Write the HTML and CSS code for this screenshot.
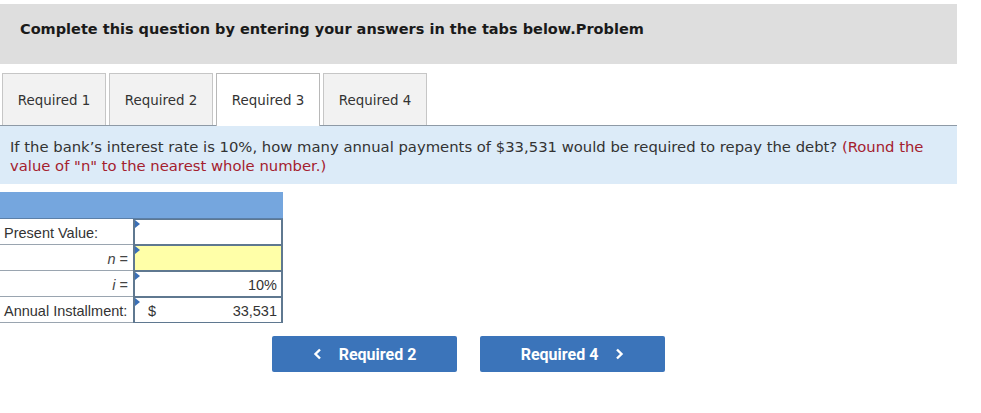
FILE: index.html
```html
<!DOCTYPE html>
<html>
<head>
<meta charset="utf-8">
<link rel="stylesheet" href="styles.css">
</head>
<body>
<div class="page">
  <div class="header">Complete this question by entering your answers in the tabs below.Problem</div>
  <div class="tabs">
    <div class="tab">Required 1</div>
    <div class="tab">Required 2</div>
    <div class="tab active">Required 3</div>
    <div class="tab">Required 4</div>
  </div>
  <div class="question">If the bank’s interest rate is 10%, how many annual payments of $33,531 would be required to repay the debt? <span class="hint">(Round the value of "n" to the nearest whole number.)</span></div>
  <div class="grid">
    <div class="ghead"></div>
    <div class="lbl">Present Value:</div>
    <div class="cell"><span class="flag"></span></div>
    <div class="lbl right"><span><i>n</i> =</span></div>
    <div class="cell yellow"><span class="flag"></span></div>
    <div class="lbl right"><span><i>i</i> =</span></div>
    <div class="cell num"><span class="flag"></span>10%</div>
    <div class="lbl">Annual Installment:</div>
    <div class="cell num split"><span class="flag"></span><span class="cur">$</span><span>33,531</span></div>
  </div>
  <div class="nav">
    <div class="btn"><svg class="chev" width="9" height="12" viewBox="0 0 9 12"><path d="M7 1.5 L2.5 6 L7 10.5" fill="none" stroke="#fff" stroke-width="2.4"/></svg>Required 2</div>
    <div class="btn"><span>Required 4</span><svg class="chev r" width="9" height="12" viewBox="0 0 9 12"><path d="M2 1.5 L6.5 6 L2 10.5" fill="none" stroke="#fff" stroke-width="2.4"/></svg></div>
  </div>
</div>
</body>
</html>
```
FILE: styles.css
```css
html, body { margin: 0; padding: 0; background: #fff; }
.page { width: 957px; padding-top: 4px; font-family: "DejaVu Sans", Verdana, sans-serif; color: #222; }
.header { background: #dedede; height: 60px; box-sizing: border-box; padding: 17px 0 0 20px; font-weight: bold; font-size: 14.5px; color: #1a1a1a; }
.tabs { display: flex; gap: 3px; padding: 9px 0 0 2px; border-bottom: 1px solid #8e9aa6; }
.tab { width: 104px; height: 52px; box-sizing: border-box; border: 1px solid #c6c6c6; border-bottom: none; background: #f2f2f2; display: flex; align-items: center; justify-content: center; font-size: 13.4px; color: #333; padding-top: 1px; }
.tab.active { background: #fff; margin-bottom: -1px; height: 53px; border-color: #b8b8b8; padding-bottom: 1px; }
.question { background: #dcebf8; height: 58px; box-sizing: border-box; padding: 11px 10px 0 10px; font-size: 14.8px; line-height: 19px; color: #333; }
.hint { color: #a4202e; }
.grid { display: grid; grid-template-columns: 133px 150px; grid-template-rows: 27px repeat(4, 26px); margin-top: 8px; width: 283px; font-family: "Liberation Sans", Arial, sans-serif; font-size: 14.5px; color: #333; }
.ghead { grid-column: 1 / 3; background: #75a6de; border-bottom: 1px solid #5b7fa8; }
.lbl { border-bottom: 1px solid #9aa5b0; display: flex; align-items: center; padding: 2px 0 0 4px; box-sizing: border-box; }
.lbl.right { justify-content: flex-end; padding-right: 5px; color: #444; }
.cell { position: relative; border: 2px solid #5f7890; border-top-width: 1px; border-bottom-width: 1px; background: #fff; display: flex; align-items: center; padding: 2px 4px 0 13px; box-sizing: border-box; }
.cell.yellow { background: #ffffa8; }
.num { justify-content: flex-end; }
.split { justify-content: space-between; }
.flag { position: absolute; left: 0; top: 0; width: 0; height: 0; border-top: 4px solid transparent; border-bottom: 4px solid transparent; border-left: 5px solid #3a6fb6; }
.nav { display: flex; gap: 23px; padding: 13px 0 0 272px; }
.btn { width: 185px; height: 36px; background: #3b74ba; color: #fff; border-radius: 2px; display: flex; align-items: center; justify-content: center; font-family: Roboto, sans-serif; font-weight: bold; font-size: 16px; }
.chev { margin-right: 17px; }
.chev.r { margin-right: 0; margin-left: 17px; }
```
